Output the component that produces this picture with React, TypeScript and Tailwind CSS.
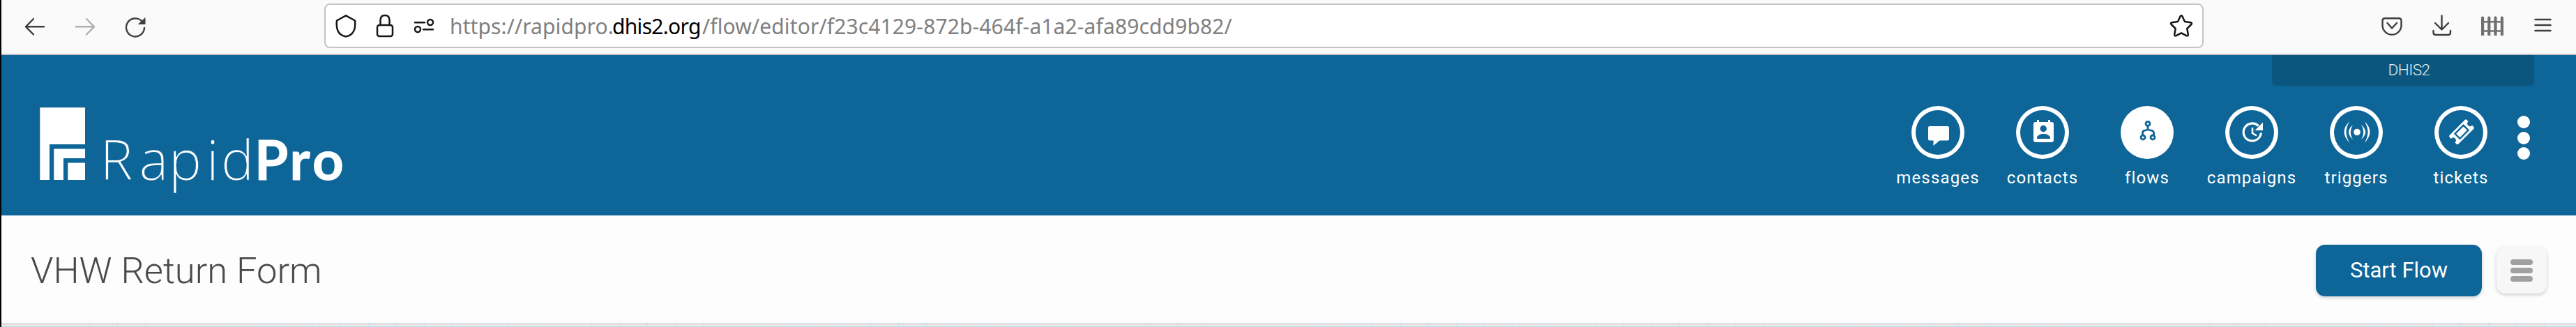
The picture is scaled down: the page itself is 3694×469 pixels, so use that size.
import React from "react";

const NAV = ["messages", "contacts", "flows", "campaigns", "triggers", "tickets"] as const;
type NavName = (typeof NAV)[number];

function NavIcon({ name }: { name: NavName }) {
  switch (name) {
    case "messages":
      return (
        <svg viewBox="0 0 76 76" className="size-[76px]" fill="currentColor">
          <path d="M26 29H52a2 2 0 0 1 2 2V47.500a2 2 0 0 1-2 2H40.500L31.500 57V49.500H26a2 2 0 0 1-2-2V31a2 2 0 0 1 2-2z" />
        </svg>
      );
    case "contacts":
      return (
        <svg viewBox="0 0 76 76" className="size-[76px]" fill="currentColor" fillRule="evenodd">
          <path d="M30 20h3v3h13v-3h3v3h2a3 3 0 0 1 3 3v23a3 3 0 0 1-3 3H28a3 3 0 0 1-3-3V26a3 3 0 0 1 3-3h2zM39.200 27.800a4.700 4.700 0 1 0 0.010 0zM30 47h19v-1.500c0-3.500-6-5.500-9.500-5.500S30 42 30 45.500z" />
        </svg>
      );
    case "flows":
      return (
        <svg viewBox="0 0 76 76" className="size-[76px]" fill="none" stroke="currentColor" strokeWidth="2.800">
          <circle cx="39" cy="25.300" r="3" />
          <circle cx="32" cy="45" r="3" />
          <circle cx="46" cy="45" r="3" />
          <path d="M39 28.500v5.500M31.500 42v-3.500q0-3.500 4-3.700 3-.3 3.500-1.500.500 1.200 3.500 1.500 5 .2 5 3.700V42" />
        </svg>
      );
    case "campaigns":
      return (
        <svg viewBox="0 0 76 76" className="size-[76px]" fill="none" stroke="currentColor" strokeWidth="3.200">
          <path d="M51.300 38.500A12.600 12.600 0 1 1 47.600 28.600" />
          <path d="M54 23.500v11.500H42.500z" fill="currentColor" stroke="none" />
          <path d="M39 31v8l6 3.500" strokeWidth="2.600" />
        </svg>
      );
    case "triggers":
      return (
        <svg viewBox="0 0 76 76" className="size-[76px]" fill="currentColor">
          <circle cx="39" cy="37.500" r="4.800" />
          <path d="M28.500 22Q12.500 37 28.500 53Q18.500 37.500 28.500 22zM49.500 22Q65.500 37 49.500 53Q59.500 37.500 49.500 22z" />
          <path d="M33 27Q21 37.500 33 48Q26.500 37.500 33 27zM45 27Q57 37.500 45 48Q51.500 37.500 45 27z" />
        </svg>
      );
    case "tickets":
      return (
        <svg viewBox="0 0 76 76" className="size-[76px]">
          <g transform="translate(39 37.300) rotate(-45)">
            <rect x="-17.500" y="-9" width="35" height="18" rx="2" fill="currentColor" />
            <circle cx="-17" cy="0" r="3.800" fill="#0d6598" />
            <circle cx="17" cy="0" r="3.800" fill="#0d6598" />
            <rect x="-8.500" y="-5" width="17" height="10" fill="none" stroke="#0d6598" strokeWidth="2.400" />
          </g>
        </svg>
      );
  }
}

function NavItem({ name }: { name: NavName }) {
  const active = name === "flows";
  return (
    <a className="flex w-[150px] flex-col items-center">
      <span
        className={
          active
            ? "grid size-[76px] place-items-center rounded-full bg-white text-[#0d6598]"
            : "grid size-[76px] place-items-center rounded-full text-white shadow-[inset_0_0_0_6px_#fff]"
        }
      >
        <NavIcon name={name} />
      </span>
      <span className="mt-[12px] text-[24px] leading-[30px] tracking-[1.150px] text-white">{name}</span>
    </a>
  );
}

function BrowserBar() {
  return (
    <div className="flex h-[79px] items-start border-b-2 border-[#c4c4c4] bg-[#fafafa]">
      <svg className="h-[77px] w-[463px] shrink-0" viewBox="2 0 463 77" fill="none" stroke="#3e3e3e" strokeWidth="2.400" strokeLinecap="round" strokeLinejoin="round">
        <path d="M63 38.300H37.500M48 27L37 38.300 48 49.500" />
        <path d="M109 38.300h25.500M124 27l11 11.300L124 49.500" stroke="#b0b0b0" />
        <path d="M207 40a13 13 0 1 1-4-10" />
        <path d="M208 26v8.500h-9z" fill="#3e3e3e" stroke="#3e3e3e" strokeWidth="1" />
      </svg>
      <div className="mt-[5px] flex h-[64px] w-[2695px] shrink-0 items-center rounded-[8px] border-2 border-[#c4c4c4] bg-white">
        <svg className="h-[60px] w-[178px] shrink-0" viewBox="467 7 178 60" fill="none" stroke="#161616" strokeWidth="2.500" strokeLinejoin="round" strokeLinecap="round">
          <path d="M496 22.300l13 7.200q1.500 13-4.500 19-4 3.500-8.500 4-4.500-.5-8.500-4-6-6-4.500-19z" />
          <rect x="541" y="36" width="22" height="16" rx="3" />
          <path d="M545.500 36v-7q0-7 6.500-7t6.500 7v7" />
          <path d="M595 32.300h14M607 42.200h14" />
          <circle cx="617" cy="32" r="4" />
          <circle cx="599" cy="42" r="4" />
        </svg>
        <div className="flex h-[60px] grow items-center font-['Noto_Sans',sans-serif] text-[30px] whitespace-pre text-[#808080]">
          <span className="w-[233px] tracking-[0.100px]">https://rapidpro.</span>
          <span className="w-[129px] tracking-[-0.700px] text-black">dhis2.org</span>
          <span className="tracking-[0.120px]">/flow/editor/f23c4129-872b-464f-a1a2-afa89cdd9b82/</span>
        </div>
        <svg className="mr-[13px] size-[34px]" viewBox="0 0 34 34" fill="none" stroke="#161616" strokeWidth="2.500" strokeLinejoin="round">
          <path d="M15.500 3.500q1.500-2.500 3 0l3.500 7.500 8.500 1.200q2.500.8.800 2.800l-6 6 1.500 8.500q0 2.700-2.500 1.700L17 27.300l-7.300 3.900q-2.500 1-2.500-1.700l1.500-8.500-6-6q-1.700-2 .8-2.800L12 11z" />
        </svg>
      </div>
      <svg className="h-[77px] w-[534px] shrink-0" viewBox="3160 0 534 77" fill="none" stroke="#3e3e3e" strokeWidth="2.400" strokeLinecap="round" strokeLinejoin="round">
        <path d="M3420 26.200h20q3.500 0 3.500 3.500v6.500a13 13 0 0 1-27 0v-6.500q0-3.500 3.500-3.500zM3423.500 33l6.500 7.500 7-7.500" />
        <path d="M3501.500 22.500v19.500M3492 33l9.500 9.500 9.500-9.500M3489.500 44v2.500q0 3.500 3.500 3.500h17.500q3.500 0 3.500-3.500V44" />
        <path d="M3558 51V25l2.100-2 2.100 2v26zM3567.200 51V25l2.100-2 2.100 2v26zM3576.400 51V25l2.100-2 2.100 2v26zM3585.800 51V25l2.100-2 2.100 2v26z" fill="#707070" stroke="none" />
        <path d="M3559 31.300h30M3559 44.500h30" stroke="#707070" />
        <path d="M3635.500 28h22M3635.500 36h22M3635.500 44h22" />
      </svg>
    </div>
  );
}

function Header() {
  return (
    <header className="flex h-[230px] justify-between bg-[#0d6598]">
      <svg className="h-[230px] w-[520px]" viewBox="2 79 520 230" fill="#fff">
        <path d="M57.300 154.300H122V207H71v51H57.300zM77.300 213.500H122V227H91v31H77.300zM97.300 233.500H122V258H97.300z" />
        <text y="258" fontSize="79" fontWeight="200" fontFamily="'Open Sans', sans-serif" x="143.500 199.500 242 296 317" stroke="#0d6598" strokeWidth="0.700">
          Rapid
        </text>
        <text y="258" fontSize="78" fontWeight="700" fontFamily="Lato, sans-serif" x="365 415.500 448" stroke="#fff" strokeWidth="1">
          Pro
        </text>
      </svg>
      <div className="flex w-[1000px] flex-col">
        <div className="mr-[60px] flex h-[44px] w-[376px] justify-center self-end rounded-b-[6px] bg-[#0b567f] pt-[7px] pl-[17px] text-[22.500px] leading-[28px] font-light tracking-[-0.500px] text-white/90">
          DHIS2
        </div>
        <nav className="mt-[29px] flex">
          <div className="flex w-[910px] justify-end">
            {NAV.map((n) => (
              <NavItem key={n} name={n} />
            ))}
          </div>
          <div className="mt-[14px] ml-[6px] flex flex-col gap-[4.500px]">
            <i className="size-[18px] rounded-full bg-white" />
            <i className="size-[18px] rounded-full bg-white" />
            <i className="size-[18px] rounded-full bg-white" />
          </div>
        </nav>
      </div>
    </header>
  );
}

export default function App() {
  return (
    <div className="flex h-[469px] w-[3694px] flex-col overflow-hidden border-l-2 border-black bg-[#fdfdfd] font-[Roboto,sans-serif]">
      <BrowserBar />
      <Header />
      <div className="flex h-[154px] shrink-0 items-start justify-between bg-[#fdfdfd]">
        <h1 className="mt-[47px] ml-[42px] text-[52.500px] leading-[64px] font-light text-[#4a4a4a]">VHW Return Form</h1>
        <div className="mt-[42px] mr-[42px] flex items-start gap-[21px]">
          <button className="h-[74px] w-[238px] rounded-[13px] bg-[#0d6598] pt-px text-[31px] text-white shadow-[0_2px_5px_rgba(0,0,0,0.200)]">
            Start Flow
          </button>
          <button className="mt-[2px] flex h-[68px] w-[72px] flex-col items-center justify-center gap-[4px] rounded-[13px] bg-[#f7f7f7] pt-[2px] shadow-[0_2px_5px_rgba(0,0,0,0.200)]">
            <i className="h-[8px] w-[32px] rounded-full bg-[#a0a0a0]" />
            <i className="h-[8px] w-[32px] rounded-full bg-[#a0a0a0]" />
            <i className="h-[8px] w-[32px] rounded-full bg-[#a0a0a0]" />
          </button>
        </div>
      </div>
      <div className="h-[6px] shrink-0 bg-[linear-gradient(90deg,#c5dff0_1px,transparent_1px),linear-gradient(#dedede,#eaeaea_5px,#c5dff0_5px)] bg-[size:40px_6px] bg-[position:6px_0]" />
    </div>
  );
}
